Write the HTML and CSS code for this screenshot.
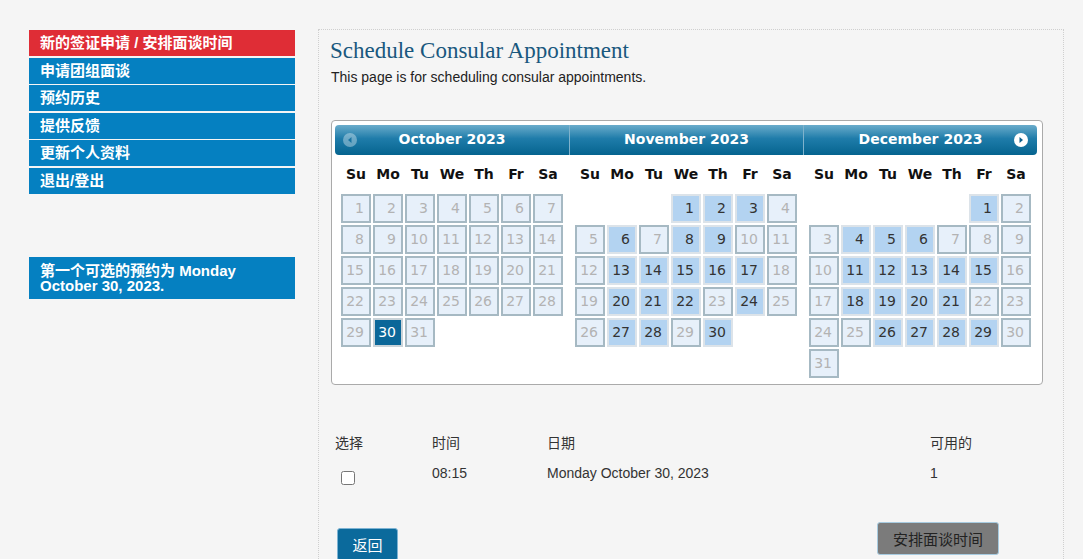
FILE: index.html
```html
<!DOCTYPE html>
<html lang="zh-CN">
<head>
    <meta charset="UTF-8">
    <title>Schedule Consular Appointment</title>
    <link rel="stylesheet" href="styles.css">
</head>
<body>
    <div class="page">
        <div class="sidebar">
            <ul class="nav">
                <li class="nav-item active">新的签证申请 / 安排面谈时间</li>
                <li class="nav-item">申请团组面谈</li>
                <li class="nav-item">预约历史</li>
                <li class="nav-item">提供反馈</li>
                <li class="nav-item">更新个人资料</li>
                <li class="nav-item">退出/登出</li>
            </ul>
            <div class="first-available">第一个可选的预约为 Monday October 30, 2023.</div>
        </div>

        <div class="main">
            <h1 class="page-title">Schedule Consular Appointment</h1>
            <p class="page-intro">This page is for scheduling consular appointments.</p>

            <div class="datepicker" id="datepicker"></div>

            <div class="slots">
                <div class="slot-row slot-head">
                    <span>选择</span>
                    <span>时间</span>
                    <span>日期</span>
                    <span>可用的</span>
                </div>
                <div class="slot-row">
                    <span><input type="checkbox" class="slot-check"></span>
                    <span>08:15</span>
                    <span>Monday October 30, 2023</span>
                    <span>1</span>
                </div>
            </div>

            <div class="actions">
                <button class="btn-back">返回</button>
                <button class="btn-schedule">安排面谈时间</button>
            </div>
        </div>
    </div>

    <script>
        // month data: first weekday, number of days, open days, selected day
        const months = [
            { name: 'October 2023', start: 0, days: 31, open: [], selected: 30, prev: true },
            { name: 'November 2023', start: 3, days: 30,
              open: [1, 2, 3, 6, 8, 9, 13, 14, 15, 16, 17, 20, 21, 22, 24, 27, 28, 30] },
            { name: 'December 2023', start: 5, days: 31,
              open: [1, 4, 5, 6, 11, 12, 13, 14, 15, 18, 19, 20, 21, 26, 27, 28, 29], next: true }
        ];
        const dayNames = ['Su', 'Mo', 'Tu', 'We', 'Th', 'Fr', 'Sa'];

        const picker = document.getElementById('datepicker');

        months.forEach(m => {
            const group = document.createElement('div');
            group.className = 'dp-month';

            let header = '<div class="dp-header">';
            if (m.prev) header += '<span class="dp-prev"><svg width="14" height="14" viewBox="0 0 14 14"><circle cx="7" cy="7" r="7" fill="#fff"/><path d="M8.5 4 L5 7 L8.5 10 Z" fill="#1a6f9c"/></svg></span>';
            if (m.next) header += '<span class="dp-next"><svg width="14" height="14" viewBox="0 0 14 14"><circle cx="7" cy="7" r="7" fill="#fff"/><path d="M5.5 4 L9 7 L5.5 10 Z" fill="#0b5f8c"/></svg></span>';
            header += '<span class="dp-title">' + m.name + '</span></div>';

            let table = '<table class="dp-table"><thead><tr>';
            dayNames.forEach(d => { table += '<th>' + d + '</th>'; });
            table += '</tr></thead><tbody><tr>';

            let col = 0;
            for (let i = 0; i < m.start; i++) { table += '<td></td>'; col++; }
            for (let d = 1; d <= m.days; d++) {
                let cls = 'dp-day';
                if (d === m.selected) cls += ' selected';
                else if (m.open.includes(d)) cls += ' open';
                else cls += ' closed';
                table += '<td><a class="' + cls + '">' + d + '</a></td>';
                col++;
                if (col === 7 && d < m.days) { table += '</tr><tr>'; col = 0; }
            }
            while (col < 7) { table += '<td></td>'; col++; }
            table += '</tr></tbody></table>';

            group.innerHTML = header + table;
            picker.appendChild(group);
        });
    </script>
</body>
</html>
```

FILE: styles.css
```css
* {
    margin: 0;
    padding: 0;
    box-sizing: border-box;
}

body {
    background-color: #f5f5f5;
    font-family: 'Liberation Sans', Arial, 'Noto Sans CJK SC', sans-serif;
    color: #333;
}

.page {
    display: flex;
    align-items: flex-start;
    padding: 29px 0 0 29px;
}

/* sidebar */
.sidebar {
    width: 266px;
    flex-shrink: 0;
    margin-top: 1px;
}

.nav {
    list-style: none;
}

.nav-item {
    height: 26px;
    line-height: 26px;
    margin-bottom: 1.6px;
    padding-left: 11px;
    background-color: #0580c1;
    color: #fff;
    font-size: 15px;
    font-weight: bold;
}

.nav-item.active {
    background-color: #df2d36;
}

.first-available {
    margin-top: 63px;
    padding: 6px 11px 4px;
    background-color: #0580c1;
    color: #fff;
    font-size: 15px;
    font-weight: bold;
    line-height: 15px;
    min-height: 42px;
}

/* main panel */
.main {
    margin-left: 23px;
    width: 746px;
    min-height: 540px;
    border: 1px dotted #cfcfcf;
    border-bottom: none;
    padding: 8px 20px 0 12px;
}

.page-title {
    font-family: 'Liberation Serif', Georgia, serif;
    font-weight: normal;
    font-size: 23px;
    color: #19587e;
    line-height: 26px;
    margin-left: -1px;
}

.page-intro {
    font-size: 14px;
    color: #222;
    margin-top: 5px;
}

/* datepicker */
.datepicker {
    display: flex;
    width: 712px;
    margin-top: 35px;
    padding: 4px 3px 5px;
    background-color: #fff;
    border: 1px solid #aaa;
    border-radius: 4px;
    font-family: 'DejaVu Sans', Verdana, sans-serif;
}

.dp-month {
    width: 234px;
    flex-shrink: 0;
}

.dp-header {
    position: relative;
    height: 30px;
    line-height: 29px;
    text-align: center;
    color: #fff;
    font-weight: bold;
    font-size: 14px;
    background: linear-gradient(to bottom, #6aaccb 0%, #1f7caa 45%, #05648f 100%);
}

.dp-month:first-child .dp-header {
    border-radius: 4px 0 0 4px;
}

.dp-month:last-child .dp-header {
    border-radius: 0 4px 4px 0;
}

.dp-month + .dp-month .dp-header {
    border-left: 1px solid #7fb2cc;
}

.dp-prev, .dp-next {
    position: absolute;
    top: 8px;
    display: flex;
}

.dp-prev {
    left: 8px;
    opacity: 0.35;
}

.dp-next {
    right: 9px;
}

.dp-table {
    width: 224px;
    margin: 0 5px;
    border-collapse: collapse;
}

.dp-table th {
    padding: 11px 0 10px;
    font-size: 14px;
    font-weight: bold;
    color: #111;
    line-height: 17px;
}

.dp-table td {
    padding: 1px;
}

.dp-day {
    display: block;
    height: 29px;
    line-height: 25px;
    padding-right: 5px;
    text-align: right;
    font-size: 14px;
    font-weight: normal;
    border: 2px solid #a6b9c3;
}

.dp-day.closed {
    background-color: #e7f0fa;
    color: #b3b3b3;
}

.dp-day.open {
    background-color: #b3d3f1;
    border-color: #dce3e9;
    color: #333;
}

.dp-day.selected {
    background-color: #0b6799;
    border-color: #c9d3d9;
    color: #fff;
}

/* slot table */
.slots {
    margin-top: 47px;
    font-size: 14px;
    color: #333;
}

.slot-row {
    display: grid;
    grid-template-columns: 97px 115px 383px 1fr;
    padding-left: 4px;
}

.slot-head {
    margin-bottom: 13px;
}

.slot-check {
    width: 14px;
    height: 14px;
    margin: 6px 0 0 6px;
}

.actions {
    display: flex;
    justify-content: space-between;
    align-items: flex-start;
    margin-top: 34px;
    padding: 0 44px 0 6px;
}

.btn-back {
    margin-top: 6px;
    width: 61px;
    height: 33px;
    background-color: #0b6a9c;
    border: 1px solid #7db3d3;
    border-radius: 3px;
    color: #fff;
    font-size: 15px;
    font-family: 'Liberation Sans', 'Noto Sans CJK SC', sans-serif;
}

.btn-schedule {
    width: 122px;
    height: 33px;
    background-color: #7b7b7b;
    border: 1px solid #a7cbe0;
    border-radius: 3px;
    color: #222;
    font-size: 15px;
    font-family: 'Liberation Sans', 'Noto Sans CJK SC', sans-serif;
}
```
